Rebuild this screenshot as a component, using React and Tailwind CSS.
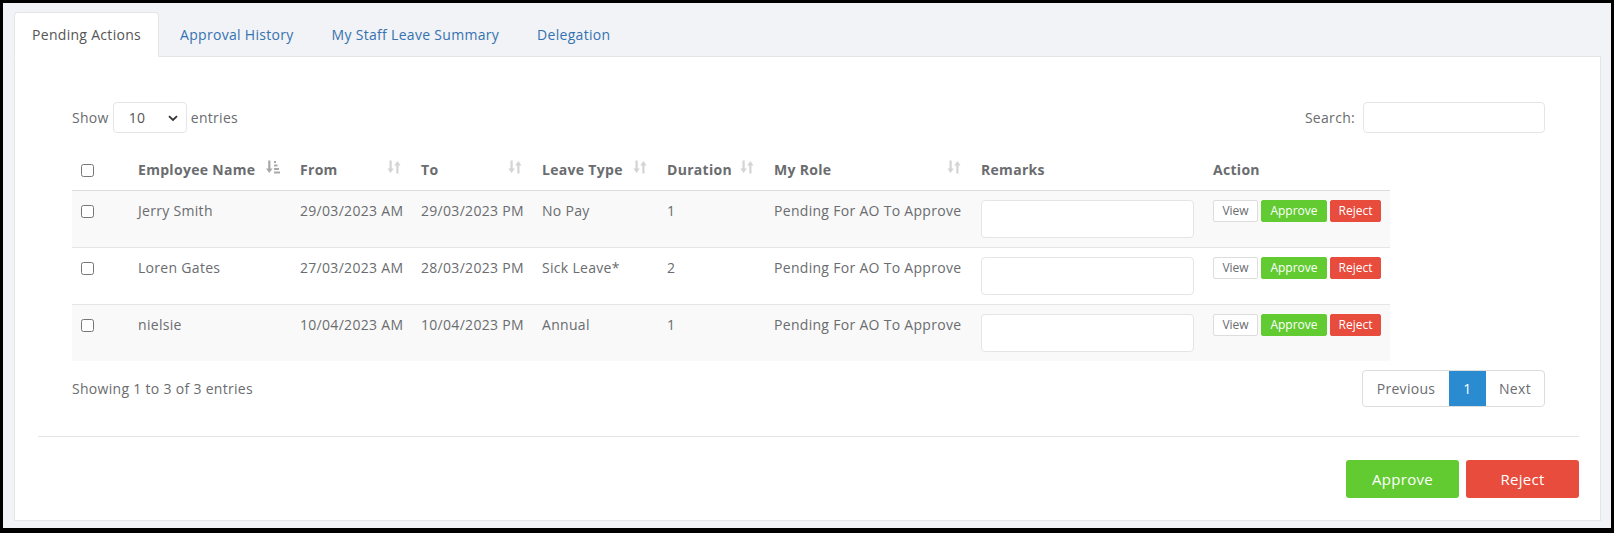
import React from 'react'

const rows = [
  { name: 'Jerry Smith', from: '29/03/2023 AM', to: '29/03/2023 PM', type: 'No Pay', dur: '1' },
  { name: 'Loren Gates', from: '27/03/2023 AM', to: '28/03/2023 PM', type: 'Sick Leave*', dur: '2' },
  { name: 'nielsie', from: '10/04/2023 AM', to: '10/04/2023 PM', type: 'Annual', dur: '1' },
]

function SortBoth() {
  return (
    <svg width="14" height="14" viewBox="0 0 14 14" className="shrink-0 mt-[1px]">
      <g fill="#d4d4d4">
        <rect x="2.5" y="0.5" width="2.2" height="9" />
        <polygon points="0.4,8.5 6.8,8.5 3.6,13" />
        <rect x="9.3" y="4.5" width="2.2" height="9" />
        <polygon points="7.2,5.5 13.6,5.5 10.4,1" />
      </g>
    </svg>
  )
}

function SortAsc() {
  return (
    <svg width="14" height="14" viewBox="0 0 14 14" className="shrink-0 mt-[1px]">
      <g fill="#a9a9a9">
        <rect x="2.2" y="0.5" width="2.2" height="9" />
        <polygon points="0,8.5 6.6,8.5 3.3,13" />
        <rect x="8" y="1" width="2" height="2" />
        <rect x="8" y="4.5" width="3.5" height="2" />
        <rect x="8" y="8" width="5" height="2" />
        <rect x="8" y="11.5" width="6" height="2" />
      </g>
    </svg>
  )
}

function Th({ children, sort }) {
  return (
    <th className="text-left font-bold pl-[8px] pr-[12px] pt-[10px] pb-[10px] leading-[21px] border-b border-[#dddddd] align-top">
      <div className="flex justify-between items-start">
        <span>{children}</span>
        {sort === 'asc' && <SortAsc />}
        {sort === 'both' && <SortBoth />}
      </div>
    </th>
  )
}

export default function App() {
  return (
    <div
      className="h-[533px] border-[3px] border-b-[5px] border-black bg-[#f1f3f6] pt-[9px] pl-[11px] pr-[10px] text-[14px] tracking-[0.3px] text-[#6a6c6f]"
      style={{ fontFamily: '"Open Sans", "Noto Sans", sans-serif' }}>
      <ul className="flex -mb-px relative z-10">
        <li className="bg-white border border-[#e4e5e7] border-b-white rounded-t-[4px] px-[17px] h-[45px] flex items-center text-[#555555]">
          Pending Actions
        </li>
        <li className="pl-[21px] pr-[19px] h-[45px] flex items-center text-[#3572b0]">Approval History</li>
        <li className="px-[19px] h-[45px] flex items-center text-[#3572b0]">My Staff Leave Summary</li>
        <li className="px-[19px] h-[45px] flex items-center text-[#3572b0]">Delegation</li>
      </ul>

      <div className="bg-white border border-[#e4e5e7] pl-[23px] pr-[21px]">
        <div className="px-[34px] pt-[45px]">
          <div className="flex justify-between items-center h-[31px]">
            <div className="flex items-center">
              <span>Show</span>
              <div className="relative ml-[4px] mr-[4px]">
                <select className="appearance-none w-[74px] h-[31px] border border-[#e4e5e7] rounded-[4px] pl-[15px] bg-white text-[#555] outline-none">
                  <option>10</option>
                  <option>25</option>
                  <option>50</option>
                  <option>100</option>
                </select>
                <svg width="10" height="7" viewBox="0 0 10 7" className="absolute right-[9px] top-[13px] pointer-events-none">
                  <path d="M1 1.2 L5 5 L9 1.2" fill="none" stroke="#333" strokeWidth="1.8" />
                </svg>
              </div>
              <span>entries</span>
            </div>
            <div className="flex items-center">
              <span className="mr-[8px]">Search:</span>
              <input className="w-[182px] h-[31px] border border-[#e4e5e7] rounded-[4px] outline-none px-2" />
            </div>
          </div>

          <table className="mt-[16px] table-fixed border-separate border-spacing-0 w-[1318px]">
            <colgroup>
              <col className="w-[58px]" />
              <col className="w-[162px]" />
              <col className="w-[121px]" />
              <col className="w-[121px]" />
              <col className="w-[125px]" />
              <col className="w-[107px]" />
              <col className="w-[207px]" />
              <col className="w-[232px]" />
              <col className="w-[185px]" />
            </colgroup>
            <thead>
              <tr>
                <th className="text-left pl-[9px] pt-[10px] pb-[10px] leading-[21px] border-b border-[#dddddd] align-top">
                  <input type="checkbox" className="w-[13px] h-[13px] align-middle -mt-[2px]" />
                </th>
                <Th sort="asc">Employee Name</Th>
                <Th sort="both">From</Th>
                <Th sort="both">To</Th>
                <Th sort="both">Leave Type</Th>
                <Th sort="both">Duration</Th>
                <Th sort="both">My Role</Th>
                <Th>Remarks</Th>
                <Th>Action</Th>
              </tr>
            </thead>
            <tbody>
              {rows.map((r, i) => {
                const td =
                  'align-top pt-[9px] pb-[9px] leading-[21px] pl-[8px] ' +
                  (i > 0 ? 'border-t border-[#e4e5e7] ' : '') +
                  (i % 2 === 0 ? 'bg-[#f9f9f9]' : 'bg-white')
                return (
                  <tr key={i}>
                    <td className={td + ' pl-[9px]'}>
                      <input type="checkbox" className="w-[13px] h-[13px] align-middle -mt-[2px]" />
                    </td>
                    <td className={td}>{r.name}</td>
                    <td className={td}>{r.from}</td>
                    <td className={td}>{r.to}</td>
                    <td className={td}>{r.type}</td>
                    <td className={td}>{r.dur}</td>
                    <td className={td}>Pending For AO To Approve</td>
                    <td className={td}>
                      <input className="block w-[213px] h-[38px] bg-white border border-[#e4e5e7] rounded-[4px] outline-none" />
                    </td>
                    <td className={td}>
                      <div className="flex gap-[3px] tracking-normal">
                        <button className="w-[45px] h-[22px] bg-white border border-[#dddddd] rounded-[2px] text-[12px] leading-[20px] text-[#6a6c6f]">
                          View
                        </button>
                        <button className="w-[66px] h-[22px] bg-[#62cb31] border border-[#62cb31] rounded-[2px] text-[12px] leading-[20px] text-white">
                          Approve
                        </button>
                        <button className="w-[51px] h-[22px] bg-[#e74c3c] border border-[#e74c3c] rounded-[2px] text-[12px] leading-[20px] text-white">
                          Reject
                        </button>
                      </div>
                    </td>
                  </tr>
                )
              })}
            </tbody>
          </table>

          <div className="mt-[9px] flex justify-between items-center">
            <span>Showing 1 to 3 of 3 entries</span>
            <div className="flex h-[37px] border border-[#dddddd] rounded-[4px] overflow-hidden">
              <span className="w-[86px] flex items-center justify-center text-[#6a6c6f]">Previous</span>
              <span className="w-[37px] flex items-center justify-center bg-[#2a8bd0] text-white">1</span>
              <span className="w-[58px] flex items-center justify-center text-[#6a6c6f]">Next</span>
            </div>
          </div>
        </div>

        <div className="mt-[29px] border-t border-[#e4e5e7]"></div>

        <div className="flex justify-end gap-[7px] pt-[23px] pb-[22px]">
          <button className="w-[113px] h-[38px] rounded-[3px] bg-[#62cb31] text-white text-[15px]">Approve</button>
          <button className="w-[113px] h-[38px] rounded-[3px] bg-[#e74c3c] text-white text-[15px]">Reject</button>
        </div>
      </div>
    </div>
  )
}
